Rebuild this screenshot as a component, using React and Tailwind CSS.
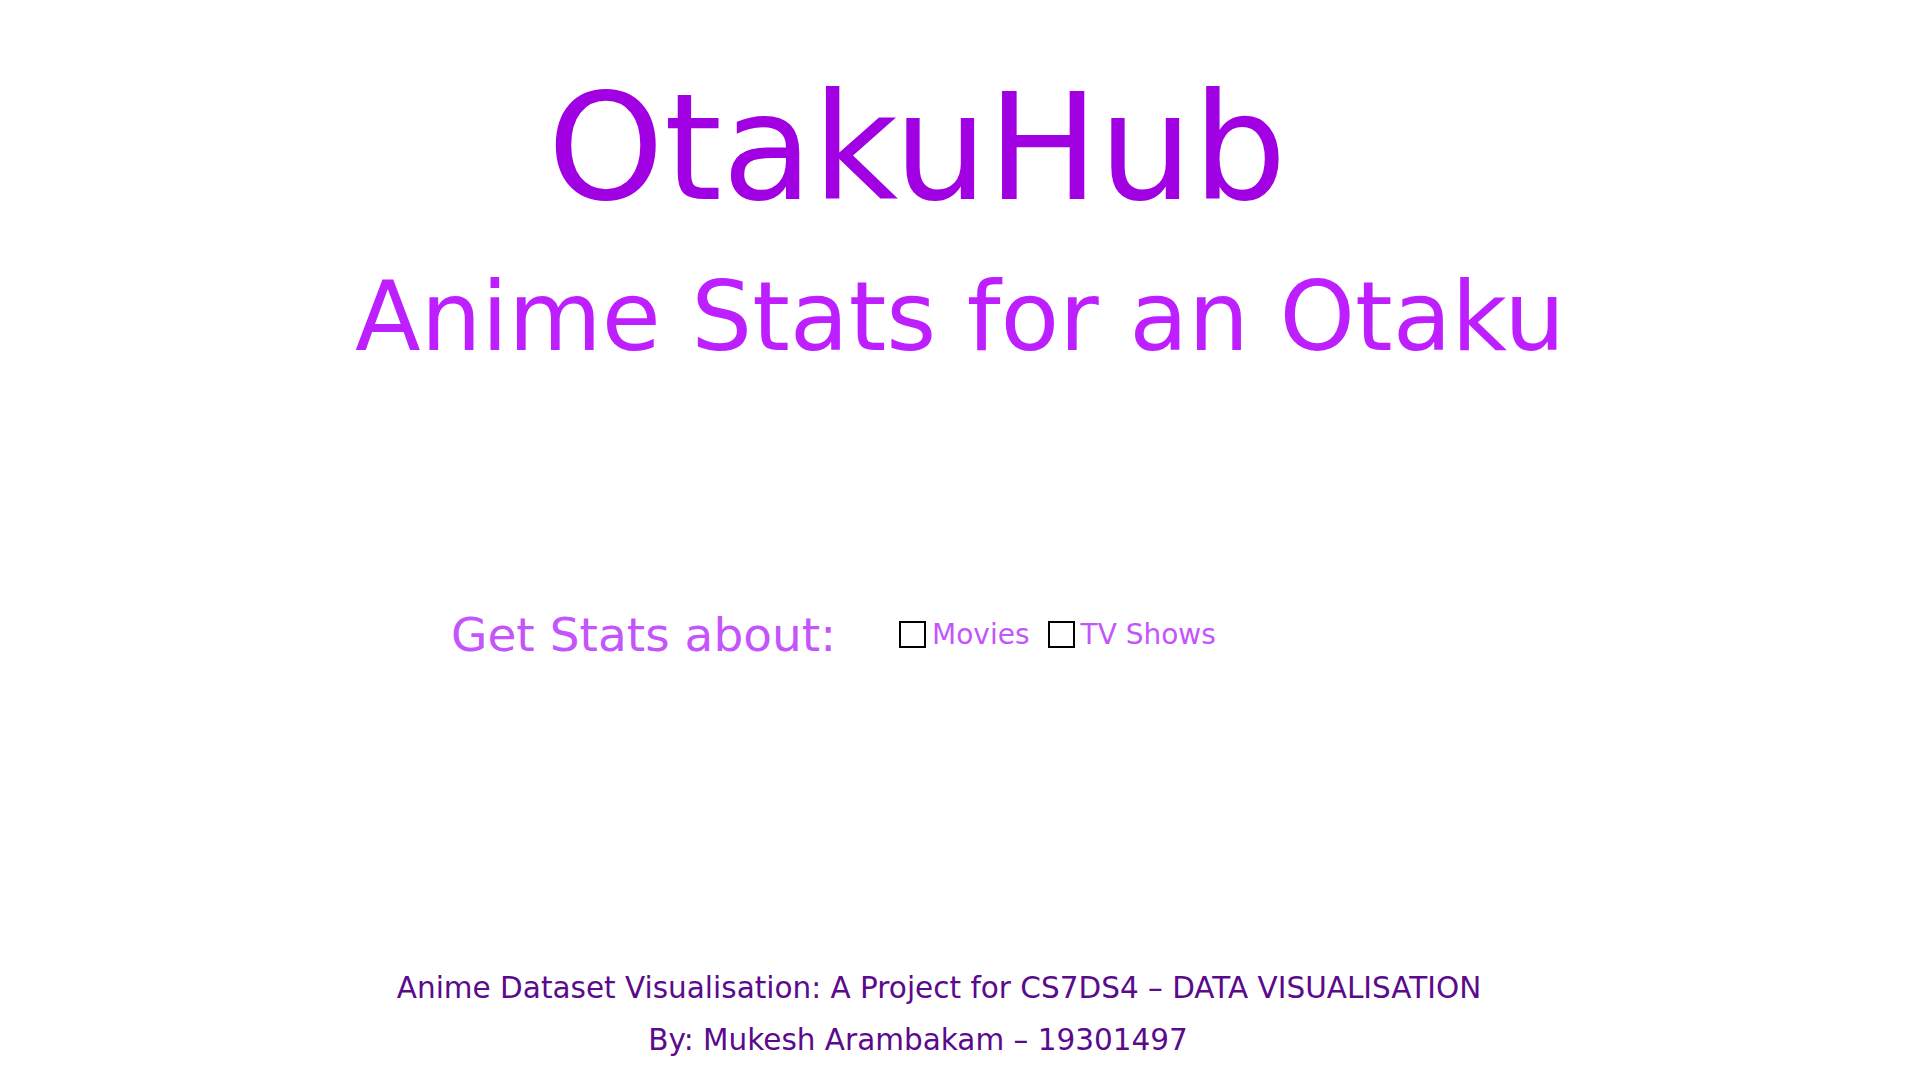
import React from "react";

function Check({ label }) {
  return (
    <label className="flex items-center gap-[6px]">
      <input
        type="checkbox"
        className="appearance-none w-[27px] h-[27px] border-2 border-black bg-white m-0"
      />
      <span className="text-[28px] leading-none text-[#c455fb]">{label}</span>
    </label>
  );
}

export default function App() {
  return (
    <div
      className="w-[1920px] h-[1080px] bg-white overflow-hidden"
      style={{ fontFamily: '"DejaVu Sans", Verdana, sans-serif' }}
    >
      <div className="pt-[74px] flex flex-col">
        <h1 className="text-center text-[148px] leading-none text-[#a000e2] pr-[86px]">
          OtakuHub
        </h1>
        <h2 className="mt-[47px] text-center text-[96px] leading-none text-[#bd1fff]">
          Anime Stats for an Otaku
        </h2>
        <div className="mt-[246px] flex items-center pl-[451px]">
          <span className="text-[47px] leading-none text-[#c455fb]">Get Stats about:</span>
          <div className="ml-[63px] flex items-center gap-[18px]">
            <Check label="Movies" />
            <Check label="TV Shows" />
          </div>
        </div>
        <div className="mt-[316px] flex flex-col items-center text-[29.5px] leading-none text-[#5b0a8c]">
          <p className="pr-[42px]">Anime Dataset Visualisation: A Project for CS7DS4 – DATA VISUALISATION</p>
          <p className="mt-[22px] pr-[84px]">By: Mukesh Arambakam – 19301497</p>
        </div>
      </div>
    </div>
  );
}
